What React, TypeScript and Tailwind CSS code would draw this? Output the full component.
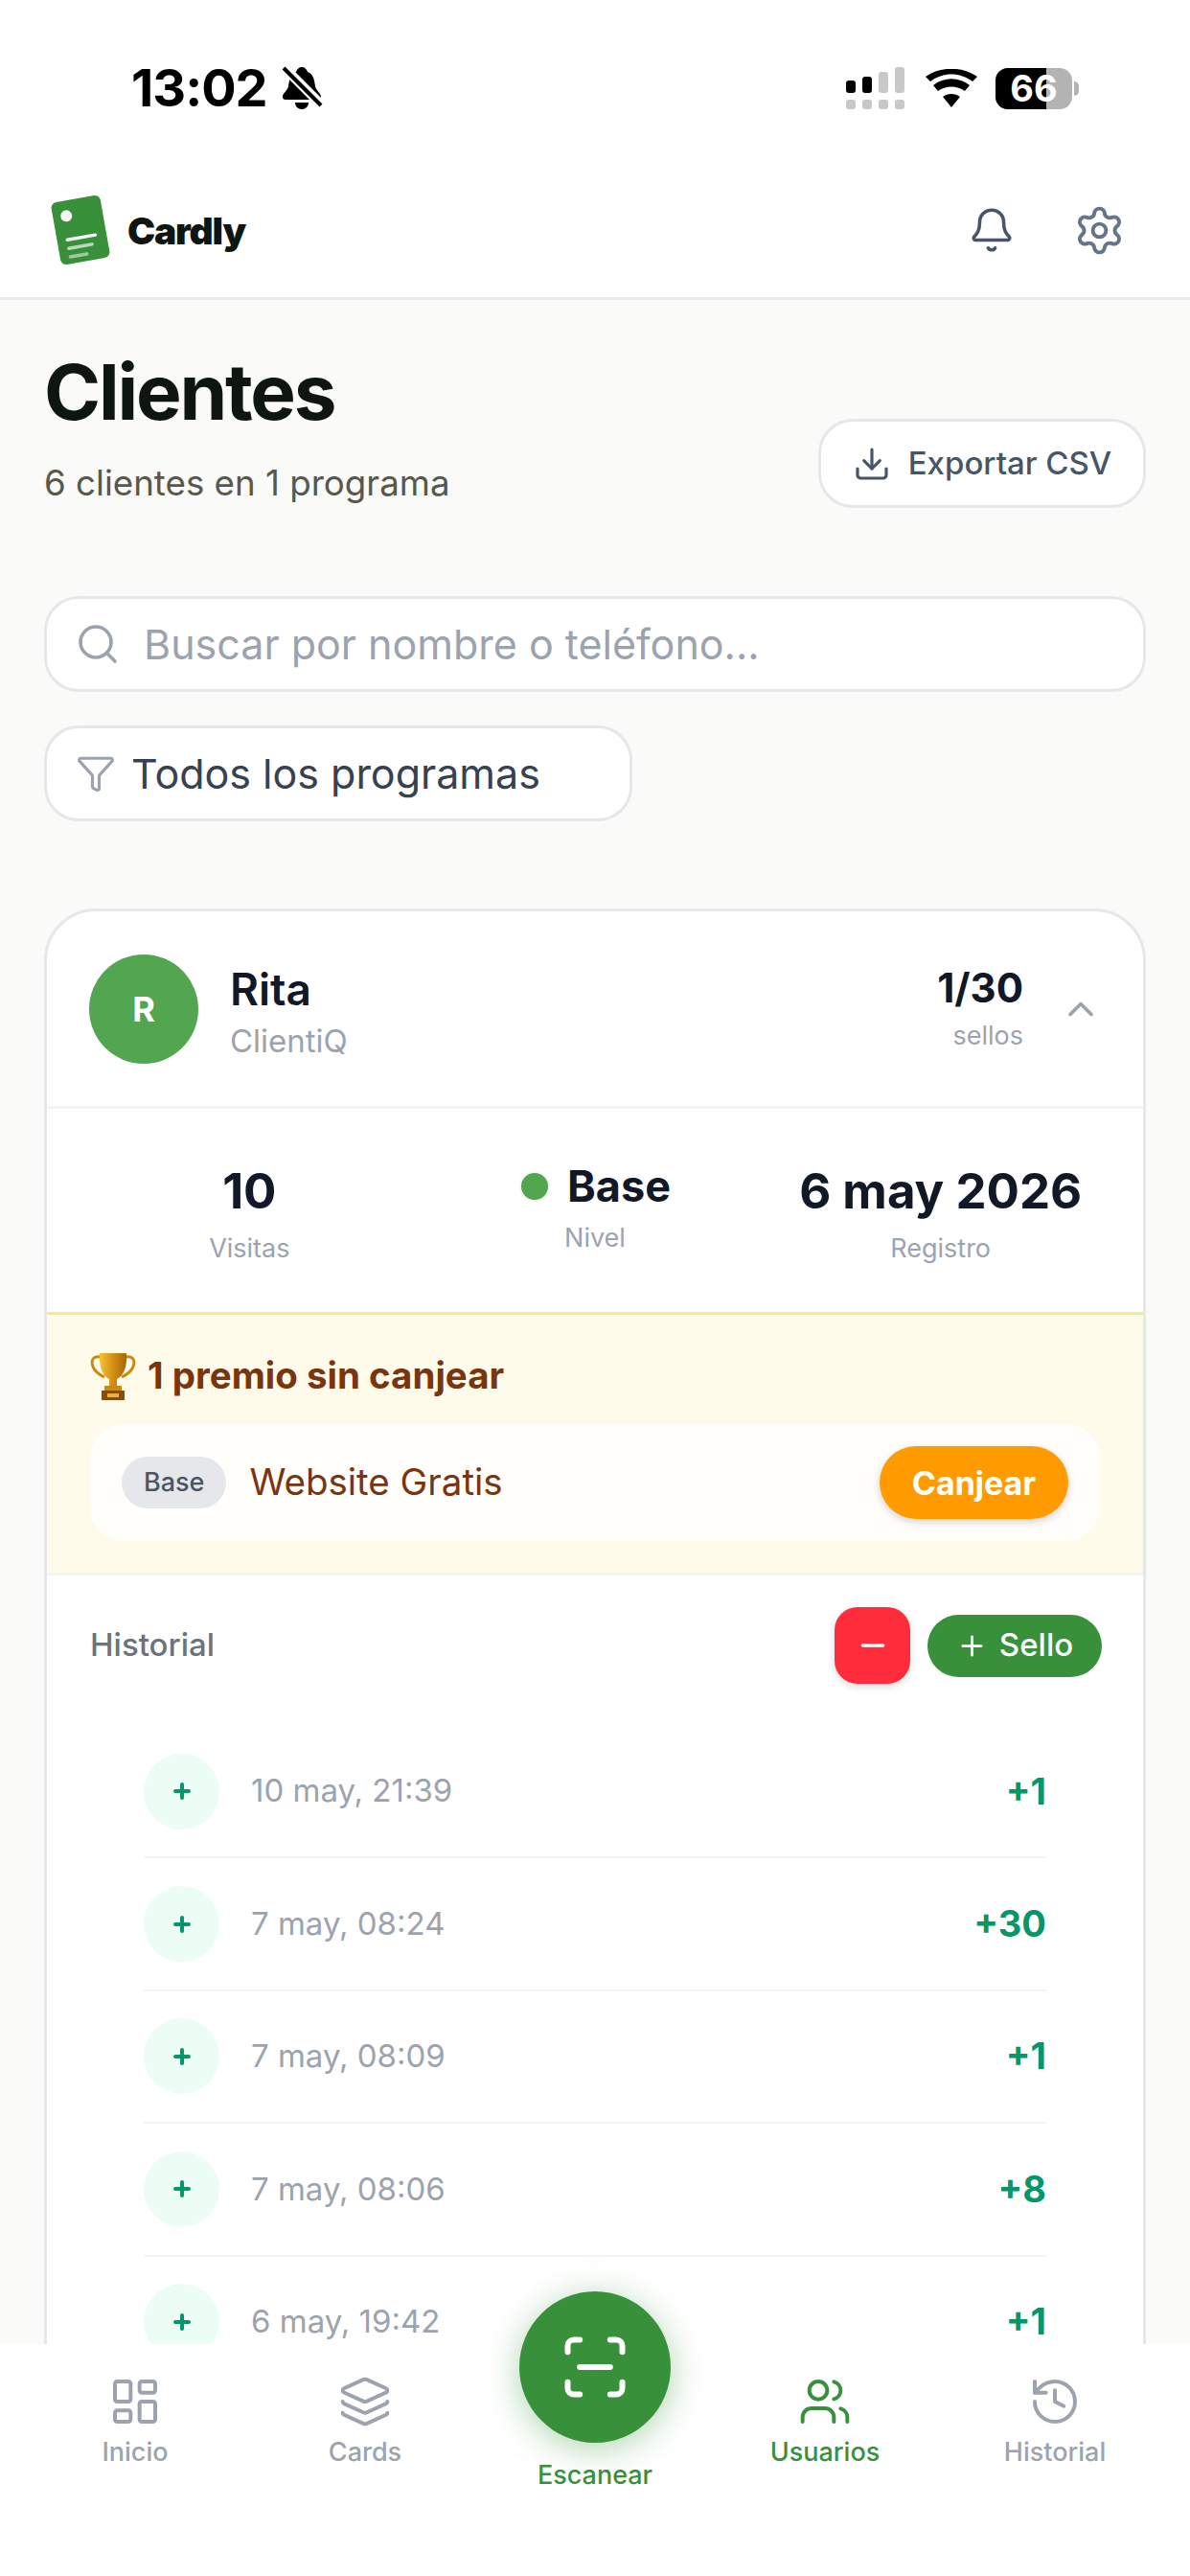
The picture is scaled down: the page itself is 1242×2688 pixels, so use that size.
import { Bell, ChevronUp, Download, Funnel, History, Layers, LayoutDashboard, Minus, Plus, ScanLine, Search, Settings, Users } from "lucide-react";

const history = [
  { date: "10 may, 21:39", value: "+1" },
  { date: "7 may, 08:24", value: "+30" },
  { date: "7 may, 08:09", value: "+1" },
  { date: "7 may, 08:06", value: "+8" },
  { date: "6 may, 19:42", value: "+1" },
];

function StatusBar() {
  return (
    <div className="h-[170px] bg-white flex items-start justify-between pl-[137px] pr-[116px] pt-[66px]">
      <div className="flex items-center gap-[14px]">
        <span className="text-[54px] leading-[52px] font-bold text-black tracking-[-1px]">13:02</span>
        <svg width="44" height="46" viewBox="0 0 44 46">
          <path d="M22 1c3 0 5 2 6 5 6 2 7 8 8 15 1 5 6 7 6 11 0 2-1 3-3 3H5c-2 0-3-1-3-3 0-4 5-6 6-11 1-7 2-13 8-15 1-3 3-5 6-5z" fill="#000" />
          <path d="M15 38h14c0 4-3 7-7 7s-7-3-7-7z" fill="#000" />
          <path d="M2 0L44 42" stroke="#fff" strokeWidth="10" />
          <path d="M3 2L42 41" stroke="#000" strokeWidth="4" />
        </svg>
      </div>
      <div className="flex items-center gap-[19px] pt-[4px]">
        <svg width="64" height="44" viewBox="0 0 64 44">
          <rect x="0" y="14" width="10" height="13" rx="3" fill="#000" />
          <rect x="17" y="10" width="10" height="17" rx="3" fill="#000" />
          <rect x="34" y="5" width="10" height="22" rx="3" fill="#c8c8c8" />
          <rect x="51" y="0" width="10" height="27" rx="3" fill="#c8c8c8" />
          <rect x="0" y="34" width="10" height="10" rx="3" fill="#c8c8c8" />
          <rect x="17" y="34" width="10" height="10" rx="3" fill="#c8c8c8" />
          <rect x="34" y="34" width="10" height="10" rx="3" fill="#c8c8c8" />
          <rect x="51" y="34" width="10" height="10" rx="3" fill="#c8c8c8" />
        </svg>
        <svg width="54" height="40" viewBox="0 0 54 40">
          <path d="M27 40L18 29c5-4 13-4 18 0z" fill="#000" />
          <path d="M13 23l-5-6c11-9 27-9 38 0l-5 6c-8-6-20-6-28 0z" fill="#000" />
          <path d="M5 13L0 8c15-11 39-11 54 0l-5 5C36 3 18 3 5 13z" fill="#000" />
        </svg>
        <div className="flex items-center gap-[2px]">
          <div className="relative w-[80px] h-[43px] rounded-[13px] bg-[#b3b3b3] flex items-center justify-center">
            <div className="absolute left-0 top-0 bottom-0 w-[53px] rounded-l-[13px] bg-black" />
            <span className="relative text-[38px] leading-[38px] font-bold text-white">66</span>
          </div>
          <div className="w-[5px] h-[15px] rounded-r-full bg-[#b3b3b3]" />
        </div>
      </div>
    </div>
  );
}

function Header() {
  return (
    <header className="h-[143px] bg-white border-b-[3px] border-[#e9e9ec] flex items-center justify-between pl-[51px] pr-[67px]">
      <div className="flex items-center gap-[16px]">
        <svg width="66" height="76" viewBox="0 0 66 76">
          <g transform="rotate(-10 33 38)">
            <rect x="7" y="5" width="52" height="66" rx="6" fill="#38913a" />
            <circle cx="21" cy="21" r="6" fill="#f2f7f1" />
            <rect x="16" y="44" width="33" height="3.5" rx="1.7" fill="#f2f7f1" />
            <rect x="16" y="53" width="28" height="3.5" rx="1.7" fill="#f2f7f1" fillOpacity="0.7" />
            <rect x="16" y="62" width="21" height="3.5" rx="1.7" fill="#f2f7f1" fillOpacity="0.55" />
          </g>
        </svg>
        <span className="text-[39px] leading-none font-black text-[#0f1511] tracking-[-1.2px]">Cardly</span>
      </div>
      <div className="flex items-center gap-[60px]">
        <Bell size={50} strokeWidth={1.7} className="text-[#475569]" />
        <Settings size={55} strokeWidth={1.7} className="text-[#64748b]" />
      </div>
    </header>
  );
}

function Stat({ value, label }: { value: string; label: string }) {
  return (
    <div className="flex flex-col items-center pt-[8px]">
      <span className="text-[51px] leading-[58px] font-bold text-[#111827]">{value}</span>
      <span className="mt-[14px] text-[27px] leading-[34px] text-[#9ca3af]">{label}</span>
    </div>
  );
}

function Trophy() {
  return (
    <svg width="48" height="50" viewBox="0 0 48 50">
      <defs>
        <linearGradient id="cup" x1="0" y1="0" x2="1" y2="0">
          <stop offset="0" stopColor="#f5c33c" />
          <stop offset="0.5" stopColor="#d48e12" />
          <stop offset="1" stopColor="#a9650a" />
        </linearGradient>
      </defs>
      <path d="M11 5C2 3 1 10 3 15c2 6 8 9 12 11" fill="none" stroke="#c98a12" strokeWidth="3" />
      <path d="M37 5c9-2 10 5 8 10-2 6-8 9-12 11" fill="none" stroke="#c98a12" strokeWidth="3" />
      <path d="M10 1h28c1 14-3 24-10 27v7h-8v-7C13 25 9 15 10 1z" fill="url(#cup)" />
      <rect x="15" y="35" width="18" height="5" fill="#c98a12" />
      <rect x="12" y="40" width="24" height="10" fill="#8a4b12" />
      <rect x="18" y="43" width="12" height="4" fill="#e7b040" />
    </svg>
  );
}

function HistoryRow({ date, value }: { date: string; value: string }) {
  return (
    <div className="h-[138.4px] shrink-0 border-b-[2px] border-[#f3f4f6] flex items-center justify-between">
      <div className="flex items-center gap-[33px]">
        <div className="w-[79px] h-[79px] rounded-full bg-[#ecfdf5] flex items-center justify-center">
          <Plus size={24} strokeWidth={4} className="text-[#059669]" />
        </div>
        <span className="text-[33px] text-[#9ca3af]">{date}</span>
      </div>
      <span className="text-[38px] font-bold text-[#059669]">{value}</span>
    </div>
  );
}

function ClientCard() {
  return (
    <section className="mt-[91px] bg-white border-[3px] border-[#e5e7eb] rounded-[54px] overflow-hidden">
      {/* Client */}
      <div className="h-[206px] border-b-[3px] border-[#f3f4f6] flex items-center pl-[44px] pr-[43px]">
        <div className="w-[114px] h-[114px] rounded-full bg-[#52a64f] flex items-center justify-center text-[36px] font-bold text-white">
          R
        </div>
        <div className="ml-[33px] flex-1 pt-[6px]">
          <div className="text-[46px] leading-[52px] font-semibold text-[#111827]">Rita</div>
          <div className="mt-[8px] text-[33px] leading-[40px] text-[#9ca3af]">ClientiQ</div>
        </div>
        <div className="flex flex-col items-end">
          <span className="text-[42px] leading-[46px] font-bold text-[#111827]">1/30</span>
          <span className="mt-[10px] text-[27px] leading-[34px] text-[#9ca3af]">sellos</span>
        </div>
        <ChevronUp size={44} strokeWidth={2} className="ml-[38px] text-[#9ca3af]" />
      </div>

      {/* Stats */}
      <div className="h-[212px] grid grid-cols-3 items-center px-[31px]">
        <Stat value="10" label="Visitas" />
        <div className="flex flex-col items-center -mt-[6px]">
          <div className="flex items-center gap-[18px]">
            <span className="w-[32px] h-[32px] rounded-full bg-[#52a64f] border-[2px] border-[#f3f4f6]" />
            <span className="text-[45px] leading-[54px] font-bold text-[#111827]">Base</span>
          </div>
          <span className="mt-[10px] text-[27px] leading-[34px] text-[#9ca3af]">Nivel</span>
        </div>
        <Stat value="6 may 2026" label="Registro" />
      </div>

      {/* Rewards */}
      <div className="h-[272px] bg-[#fffbeb] border-t-[3px] border-[#fde68a] px-[45px] pt-[38px]">
        <div className="flex items-center gap-[12px] h-[52px]">
          <Trophy />
          <span className="text-[38.5px] font-bold text-[#78350f]">1 premio sin canjear</span>
        </div>
        <div className="mt-[24px] h-[122px] rounded-[36px] bg-white/80 flex items-center justify-between pl-[33px] pr-[33px]">
          <div className="flex items-center gap-[24px]">
            <span className="h-[54px] px-[23px] rounded-full bg-[#e5e7eb] flex items-center text-[27px] font-medium text-[#4b5563]">Base</span>
            <span className="text-[38.5px] text-[#78350f]">Website Gratis</span>
          </div>
          <button className="w-[197px] h-[76px] rounded-full bg-[#ff9b00] shadow-[0_3px_9px_rgba(0,0,0,0.18)] text-[34px] font-bold text-white">
            Canjear
          </button>
        </div>
      </div>

      {/* History */}
      <div className="border-t-[3px] border-[#f3f4f6] pl-[45px] pr-[43px] pt-[33px]">
        <div className="flex items-center justify-between h-[80px]">
          <span className="text-[33px] font-medium text-[#6b7280]">Historial</span>
          <div className="flex items-center gap-[18px]">
            <button className="w-[79px] h-[80px] rounded-[24px] bg-[#ff2d3b] shadow-[0_3px_9px_rgba(0,0,0,0.15)] flex items-center justify-center">
              <Minus size={36} strokeWidth={2.4} className="text-white" />
            </button>
            <button className="w-[182px] h-[65px] rounded-full bg-[#38913a] flex items-center justify-center gap-[12px] text-[33px] font-medium text-white">
              <Plus size={33} strokeWidth={2} />
              Sello
            </button>
          </div>
        </div>
        <div className="mt-[44px] ml-[56px] mr-[58px] h-[760px] flex flex-col">
          {history.map((row) => (
            <HistoryRow key={row.date} date={row.date} value={row.value} />
          ))}
        </div>
      </div>
    </section>
  );
}

function NavItem({ icon, label, active }: { icon: React.ReactNode; label: string; active?: boolean }) {
  return (
    <div className={`w-[240px] flex flex-col items-center ${active ? "text-[#38913a]" : "text-[#9ca3af]"}`}>
      {icon}
      <span className="mt-[8px] text-[27px] leading-[34px] font-medium">{label}</span>
    </div>
  );
}

function BottomNav() {
  return (
    <nav className="absolute left-0 right-0 bottom-0 h-[242px] bg-white/95 flex justify-center pt-[32px]">
      <NavItem icon={<LayoutDashboard size={56} strokeWidth={1.7} />} label="Inicio" />
      <NavItem icon={<Layers size={56} strokeWidth={1.7} />} label="Cards" />
      <div className="w-[240px] flex flex-col items-center -mt-[87px]">
        <div className="w-[158px] h-[158px] rounded-full bg-[#38913a] shadow-[0_6px_36px_rgba(56,145,58,0.4)] flex items-center justify-center">
          <ScanLine size={76} strokeWidth={1.9} className="text-white" />
        </div>
        <span className="mt-[17px] text-[27px] leading-[34px] font-medium text-[#38913a]">Escanear</span>
      </div>
      <NavItem icon={<Users size={56} strokeWidth={1.7} />} label="Usuarios" active />
      <NavItem icon={<History size={56} strokeWidth={1.7} />} label="Historial" />
    </nav>
  );
}

export default function App() {
  return (
    <div className="relative w-[1242px] h-[2688px] overflow-hidden bg-[#fafaf8] font-['Inter',sans-serif]">
      <StatusBar />
      <Header />
      <main className="px-[46px]">
        {/* Title */}
        <div className="flex items-end justify-between pt-[52px]">
          <div>
            <h1 className="text-[80px] leading-[88px] font-bold text-[#0f1511] tracking-[-2.2px]">Clientes</h1>
            <p className="mt-[29px] mb-[4px] text-[36.7px] leading-[44px] text-[#57574c]">6 clientes en 1 programa</p>
          </div>
          <button className="w-[342px] h-[93px] bg-white border-[3px] border-[#e5e7eb] rounded-[36px] flex items-center justify-center gap-[18px] text-[33px] font-medium text-[#475569]">
            <Download size={40} strokeWidth={1.9} />
            Exportar CSV
          </button>
        </div>

        {/* Filters */}
        <div className="mt-[92px] h-[100px] bg-white border-[3px] border-[#e5e7eb] rounded-[36px] flex items-center pl-[29px] gap-[24px]">
          <Search size={48} strokeWidth={1.8} className="text-[#9ca3af]" />
          <span className="text-[43px] text-[#9ca3af]">Buscar por nombre o teléfono...</span>
        </div>
        <div className="mt-[35px] w-[614px] h-[100px] bg-white border-[3px] border-[#e5e7eb] rounded-[36px] flex items-center pl-[30px] gap-[16px]">
          <Funnel size={42} strokeWidth={1.8} className="text-[#9ca3af]" />
          <span className="text-[43px] text-[#374151]">Todos los programas</span>
        </div>

        <ClientCard />
      </main>
      <BottomNav />
    </div>
  );
}
